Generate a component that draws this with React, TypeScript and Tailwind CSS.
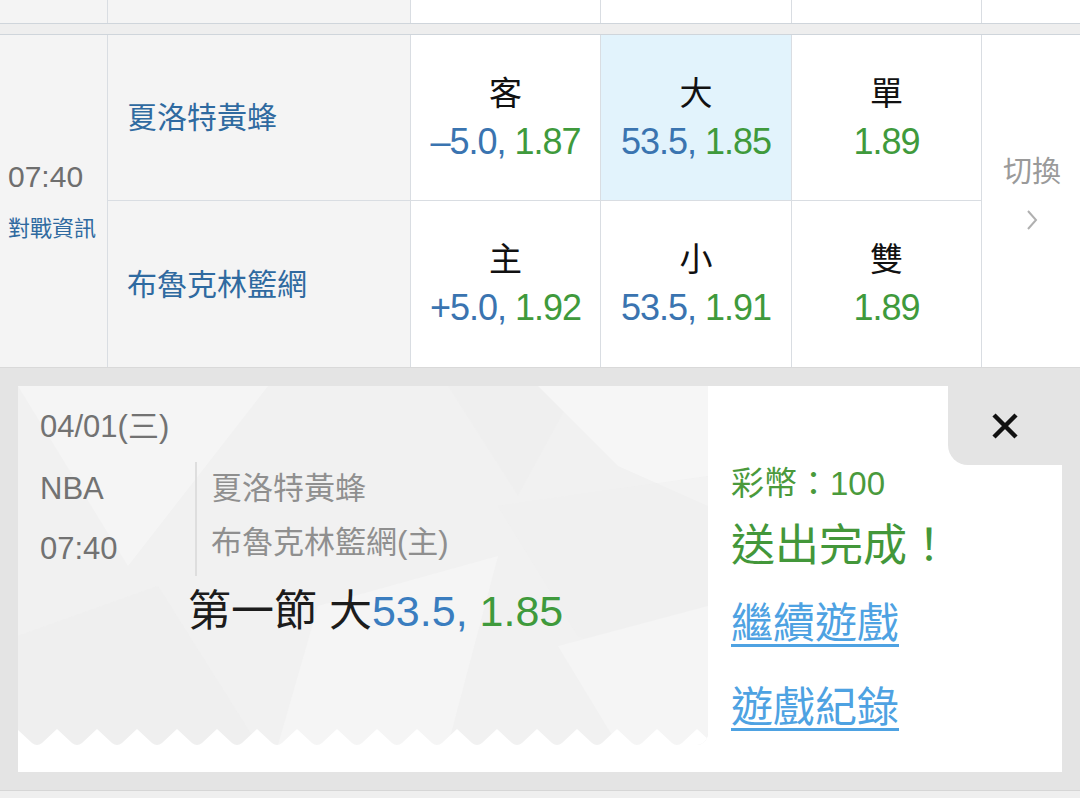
import React from "react";

const font = "font-['Liberation_Sans','Noto_Sans_CJK_TC',sans-serif]";

interface Odd {
  label: string;
  line?: string;
  price: string;
  active?: boolean;
}

const topOdds: Odd[] = [
  { label: "客", line: "–5.0, ", price: "1.87" },
  { label: "大", line: "53.5, ", price: "1.85", active: true },
  { label: "單", price: "1.89" },
];

const bottomOdds: Odd[] = [
  { label: "主", line: "+5.0, ", price: "1.92" },
  { label: "小", line: "53.5, ", price: "1.91" },
  { label: "雙", price: "1.89" },
];

function OddCell({ odd }: { odd: Odd }) {
  return (
    <div
      className={`flex flex-col items-center justify-center border-r border-[#d9dde2] ${
        odd.active ? "bg-[#e2f3fc]" : "bg-white"
      }`}
    >
      <span className="text-[33px] leading-[44px] text-[#111]">{odd.label}</span>
      <span className="mt-[4px] text-[36px] leading-[44px] tracking-[-1px]">
        {odd.line && <span className="text-[#3a74b0]">{odd.line}</span>}
        <span className="text-[#3f9a3c]">{odd.price}</span>
      </span>
    </div>
  );
}

// zigzag bottom edge: sharp white peaks, rounded grey tips
const teethPath = (() => {
  let d = "M0,359 L0,344 ";
  for (let x = -1; x < 700; x += 40) {
    d += `L${x + 15},357 Q${x + 20},361 ${x + 25},357 L${x + 40},343 `;
  }
  d += "L690,359 Z";
  return d;
})();

function TicketBackground() {
  return (
    <svg className="absolute inset-0 h-full w-full" viewBox="0 0 690 359" preserveAspectRatio="none">
      <polygon points="0,0 250,0 110,180" fill="#f5f5f5" />
      <polygon points="430,0 560,0 500,110" fill="#eeeeee" opacity="0.6" />
      <polygon points="520,0 690,0 690,120 600,80" fill="#f6f6f6" />
      <polygon points="480,120 690,90 690,300 560,250" fill="#efefef" opacity="0.5" />
      <polygon points="0,250 140,200 240,359 0,359" fill="#eeeeee" opacity="0.5" />
      <polygon points="300,220 480,170 430,359 260,359" fill="#f5f5f5" />
      <polygon points="540,260 690,220 690,359 600,359" fill="#f5f5f5" />
      <path d={teethPath} fill="#ffffff" />
    </svg>
  );
}

export default function App() {
  return (
    <div className={`h-[798px] w-[1080px] overflow-hidden bg-[#e5e5e5] ${font}`}>
      {/* previous row tail */}
      <div className="grid h-[24px] grid-cols-[108px_303px_190px_191px_190px_98px] border-b border-[#cfd5db]">
        <div className="border-r border-[#d9dde2] bg-[#f4f4f4]" />
        <div className="border-r border-[#d9dde2] bg-[#f4f4f4]" />
        <div className="border-r border-[#d9dde2] bg-white" />
        <div className="border-r border-[#d9dde2] bg-white" />
        <div className="border-r border-[#d9dde2] bg-white" />
        <div className="bg-white" />
      </div>
      <div className="h-[11px] border-b border-[#cfd5db] bg-[#eeeeee]" />

      {/* match row */}
      <div className="grid h-[332px] grid-cols-[108px_303px_571px_98px]">
        <div className="flex flex-col items-start justify-center border-r border-[#d9dde2] bg-[#f4f4f4] pl-[8px]">
          <span className="text-[30px] leading-[38px] text-[#6e6e6e]">07:40</span>
          <span className="mt-[18px] text-[22px] leading-[30px] text-[#2f6aa0]">對戰資訊</span>
        </div>
        <div className="grid grid-rows-2 border-r border-[#d9dde2] bg-[#f4f4f4]">
          <div className="flex items-center border-b border-[#d9dde2] pl-[19px] text-[30px] text-[#2f6aa0]">
            夏洛特黃蜂
          </div>
          <div className="flex items-center pl-[19px] text-[30px] text-[#2f6aa0]">布魯克林籃網</div>
        </div>
        <div className="grid grid-rows-2">
          <div className="grid grid-cols-[190px_191px_190px] border-b border-[#d9dde2]">
            {topOdds.map((o) => (
              <OddCell key={o.label} odd={o} />
            ))}
          </div>
          <div className="grid grid-cols-[190px_191px_190px]">
            {bottomOdds.map((o) => (
              <OddCell key={o.label} odd={o} />
            ))}
          </div>
        </div>
        <div className="flex flex-col items-center justify-center bg-white pb-[16px] pl-[2px]">
          <span className="text-[29px] leading-[36px] text-[#9a9a9a]">切換</span>
          <svg width="14" height="24" viewBox="0 0 14 24" className="mt-[18px]">
            <path d="M3 3 L11 12 L3 21" fill="none" stroke="#b0b0b0" strokeWidth="2" />
          </svg>
        </div>
      </div>

      {/* confirmation panel */}
      <div className="h-[423px] border-t border-[#d9d9d9] bg-[#e4e4e4] px-[18px] pt-[18px]">
        <div className="flex h-[386px] bg-white">
          <div className="relative h-[359px] w-[690px] overflow-hidden rounded-br-[12px] bg-[#f1f1f1]">
            <TicketBackground />
            <div className="relative pl-[22px] pt-[20px]">
              <div className="text-[31px] leading-[42px] text-[#727272]">04/01(三)</div>
              <div className="mt-[14px] flex">
                <div className="w-[155px] text-[31px] text-[#727272]">
                  <div className="leading-[54px]">NBA</div>
                  <div className="mt-[6px] leading-[54px]">07:40</div>
                </div>
                <div className="border-l-2 border-[#dedede] pl-[14px] text-[31px] text-[#8f8f8f]">
                  <div className="leading-[54px]">夏洛特黃蜂</div>
                  <div className="leading-[54px]">布魯克林籃網(主)</div>
                </div>
              </div>
              <div className="mt-[9px] pl-[148px] text-[43px] leading-[52px] text-[#1c1c1c]">
                第一節 大<span className="text-[#3a7dbf]">53.5, </span>
                <span className="text-[#3f9a3c]">1.85</span>
              </div>
            </div>
          </div>
          <div className="flex flex-1 flex-col">
            <div className="flex justify-end">
              <div className="flex h-[79px] w-[114px] items-center justify-center rounded-bl-[20px] bg-[#e4e4e4]">
                <svg width="30" height="30" viewBox="0 0 30 30">
                  <path d="M4 4 L26 26 M26 4 L4 26" stroke="#111" strokeWidth="4.5" />
                </svg>
              </div>
            </div>
            <div className="pl-[23px]">
              <div className="text-[33px] leading-[38px] text-[#4a9a3c]">彩幣：100</div>
              <div className="mt-[16px] text-[44px] leading-[54px] text-[#43973a]">送出完成！</div>
              <div className="mt-[26px] text-[42px] leading-[50px] text-[#4ea2e2] underline decoration-[3px] underline-offset-[6px]">
                繼續遊戲
              </div>
              <div className="mt-[34px] text-[42px] leading-[50px] text-[#4ea2e2] underline decoration-[3px] underline-offset-[6px]">
                遊戲紀錄
              </div>
            </div>
          </div>
        </div>
      </div>
      <div className="h-[12px] border-t border-[#d6d6d6] bg-[#efefef]" />
    </div>
  );
}
